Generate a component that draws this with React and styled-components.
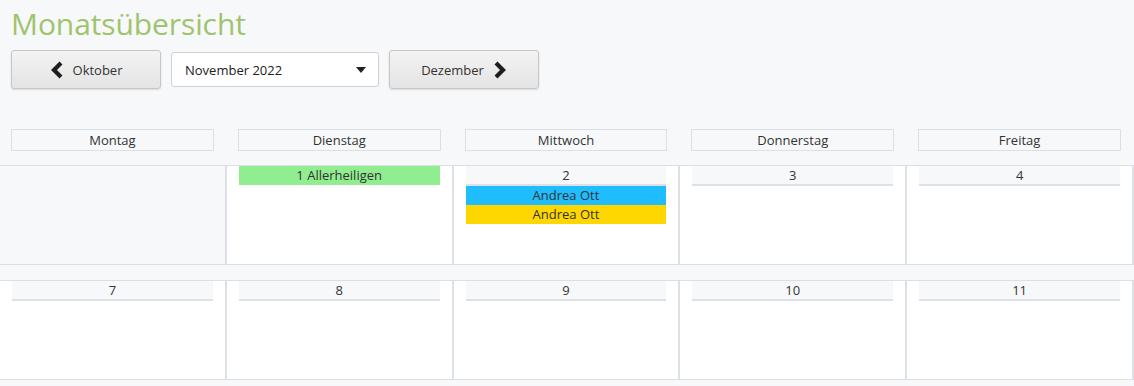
import styled, { createGlobalStyle } from 'styled-components'

const GlobalStyle = createGlobalStyle`
  body {
    margin: 0;
    background-color: #f7f8fa;
    font-family: "Open Sans", "Noto Sans", sans-serif;
    color: #333;
  }
`

const Page = styled.div`
  width: 1134px;
  height: 386px;
  overflow: hidden;
  background-color: #f7f8fa;
`

const Top = styled.div`
  padding: 0 11px;
`

const Title = styled.h1`
  margin: 0;
  padding-top: 6px;
  font-size: 30px;
  font-weight: 400;
  line-height: 36px;
  color: #9fc46c;
  letter-spacing: -0.1px;
`

const Toolbar = styled.div`
  display: flex;
  align-items: center;
  gap: 10px;
  margin-top: 8px;
`

const NavButton = styled.button`
  display: flex;
  align-items: center;
  justify-content: center;
  gap: 9px;
  width: 150px;
  height: 39px;
  padding: 0;
  border: 1px solid #c6c6c6;
  border-radius: 3px;
  background: linear-gradient(#f3f3f3, #e4e4e4);
  box-shadow: 0 1px 2px rgba(0, 0, 0, 0.12);
  font-family: inherit;
  font-size: 13px;
  color: #333;
`

const Chevron = ({ dir }) => (
  <svg width="14" height="20" viewBox="0 0 14 20">
    <polyline
      points={dir === 'left' ? '11,3 4,10 11,17' : '3,3 10,10 3,17'}
      fill="none"
      stroke="#1e1e1e"
      strokeWidth="4.2"
      strokeLinejoin="miter"
    />
  </svg>
)

const Select = styled.div`
  display: flex;
  align-items: center;
  justify-content: space-between;
  box-sizing: border-box;
  width: 208px;
  height: 35px;
  padding: 0 12px 0 13px;
  background-color: #fff;
  border: 1px solid #d0d0d0;
  border-radius: 3px;
  font-size: 13px;
  color: #222;
`

const Caret = styled.span`
  width: 0;
  height: 0;
  border-left: 5px solid transparent;
  border-right: 5px solid transparent;
  border-top: 6px solid #222;
`

const Grid = styled.div`
  display: grid;
  grid-template-columns: repeat(5, 1fr);
`

const WeekdayRow = styled(Grid)`
  margin-top: 40px;
`

const WeekdayCell = styled.div`
  padding: 0 13px 0 11px;
`

const WeekdayLabel = styled.div`
  box-sizing: border-box;
  height: 22px;
  border: 1px solid #dcdfe3;
  background-color: #f7f8fa;
  font-size: 13px;
  line-height: 20px;
  text-align: center;
`

const Week = styled(Grid)`
  height: 98px;
  margin-top: ${(p) => p.$gap}px;
  border-top: 1px solid #dcdfe3;
  border-bottom: 1px solid #dcdfe3;
`

const DayCell = styled.div`
  padding: 0 12px 0 12px;
  border-right: 2px solid #dde0e4;
  background-color: ${(p) => (p.$outside ? '#f7f8fa' : '#fff')};
`

const DayNumber = styled.div`
  box-sizing: border-box;
  height: 20px;
  background-color: #f7f8fa;
  border-bottom: 2px solid #dde0e4;
  font-size: 13px;
  line-height: 19px;
  text-align: center;
`

const Entry = styled.div`
  height: 19px;
  background-color: ${(p) => p.$color};
  font-size: 13px;
  line-height: 19px;
  text-align: center;
  color: #333;
`

const weekdays = ['Montag', 'Dienstag', 'Mittwoch', 'Donnerstag', 'Freitag']

const weeks = [
  [
    { outside: true },
    { entries: [{ text: '1 Allerheiligen', color: '#90ee90' }] },
    { day: 2, entries: [{ text: 'Andrea Ott', color: '#1fbdfd' }, { text: 'Andrea Ott', color: '#ffd700' }] },
    { day: 3 },
    { day: 4 },
  ],
  [{ day: 7 }, { day: 8 }, { day: 9 }, { day: 10 }, { day: 11 }],
]

const App = () => {
  return (
    <Page>
      <GlobalStyle />
      <Top>
        <Title>Monatsübersicht</Title>
        <Toolbar>
          <NavButton>
            <Chevron dir="left" /> Oktober
          </NavButton>
          <Select>
            November 2022
            <Caret />
          </Select>
          <NavButton>
            Dezember <Chevron dir="right" />
          </NavButton>
        </Toolbar>
      </Top>
      <WeekdayRow>
        {weekdays.map((d) => (
          <WeekdayCell key={d}>
            <WeekdayLabel>{d}</WeekdayLabel>
          </WeekdayCell>
        ))}
      </WeekdayRow>
      {weeks.map((week, i) => (
        <Week key={i} $gap={i === 0 ? 14 : 15}>
          {week.map((cell, j) => (
            <DayCell key={j} $outside={cell.outside}>
              {cell.day && <DayNumber>{cell.day}</DayNumber>}
              {cell.entries &&
                cell.entries.map((e, k) => (
                  <Entry key={k} $color={e.color}>
                    {e.text}
                  </Entry>
                ))}
            </DayCell>
          ))}
        </Week>
      ))}
    </Page>
  )
}

export default App
